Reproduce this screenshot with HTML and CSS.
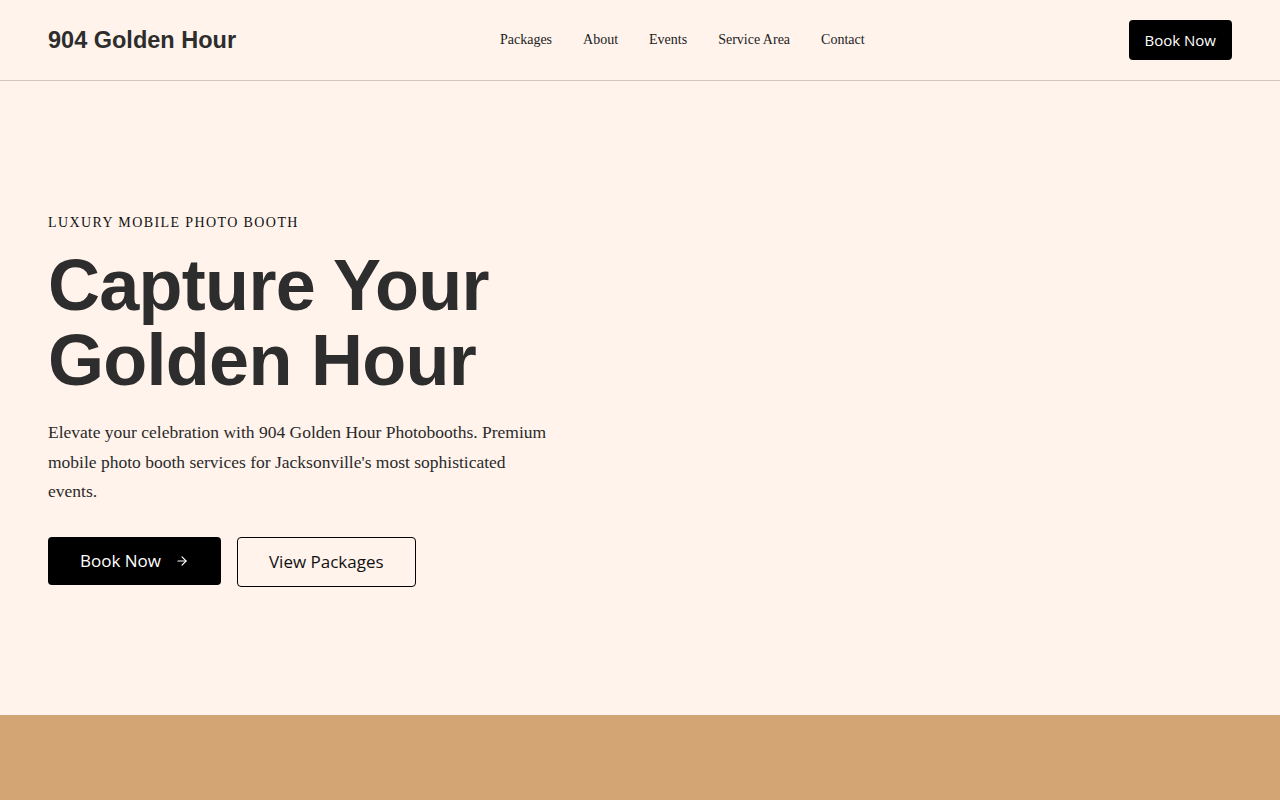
FILE: index.html
```html
<!DOCTYPE html>
<html lang="en">
<head>
    <meta charset="UTF-8">
    <meta name="viewport" content="width=device-width, initial-scale=1.0">
    <title>904 Golden Hour Photobooths</title>
    <link rel="stylesheet" href="styles.css">
</head>
<body>
    <header class="site-header">
        <a href="#" class="logo">904 Golden Hour</a>
        <nav class="main-nav">
            <a href="#packages">Packages</a>
            <a href="#about">About</a>
            <a href="#events">Events</a>
            <a href="#service-area">Service Area</a>
            <a href="#contact">Contact</a>
        </nav>
        <a href="#book" class="btn btn-dark btn-small">Book Now</a>
    </header>

    <section class="hero">
        <div class="hero-content">
            <p class="eyebrow">Luxury Mobile Photo Booth</p>
            <h1>Capture Your Golden Hour</h1>
            <p class="lead">Elevate your celebration with 904 Golden Hour Photobooths. Premium mobile photo booth services for Jacksonville's most sophisticated events.</p>
            <div class="hero-actions">
                <a href="#book" class="btn btn-dark btn-large">
                    Book Now
                    <svg class="arrow" width="14" height="14" viewBox="0 0 24 24" fill="none" stroke="currentColor" stroke-width="2" stroke-linecap="round" stroke-linejoin="round"><path d="M5 12h14"/><path d="M12 5l7 7-7 7"/></svg>
                </a>
                <a href="#packages" class="btn btn-outline btn-large">View Packages</a>
            </div>
        </div>
    </section>

    <section class="band"></section>
</body>
</html>
```

FILE: styles.css
```css
* {
    box-sizing: border-box;
}
body {
    margin: 0;
    background-color: #fff3ec;
    color: #2d2d2d;
    font-family: "Liberation Serif", "Times New Roman", serif;
}
a {
    color: inherit;
    text-decoration: none;
}
.site-header {
    height: 81px;
    display: flex;
    align-items: center;
    justify-content: space-between;
    padding: 0 48px;
    border-bottom: 1px solid #d3c6bd;
}
.logo {
    font-family: "Liberation Sans", Arial, sans-serif;
    font-weight: bold;
    font-size: 23.5px;
    color: #2d2d2d;
}
.main-nav {
    display: flex;
    gap: 31px;
    font-size: 14px;
}
.main-nav a {
    color: #222;
}
.btn {
    display: inline-flex;
    align-items: center;
    justify-content: center;
    font-family: "Open Sans", "Noto Sans", sans-serif;
    border-radius: 4px;
}
.btn-dark {
    background-color: #000;
    color: #fff;
}
.btn-small {
    height: 40px;
    padding: 0 16px;
    font-size: 15px;
}
.btn-large {
    height: 48px;
    font-size: 17px;
    padding: 0 32px;
}
.btn-outline {
    border: 1px solid #000;
    color: #111;
    height: 50px;
    padding: 0 31px;
}
.btn .arrow {
    margin-left: 14px;
}
.hero {
    height: 634px;
    display: flex;
    align-items: center;
    padding: 0 48px;
}
.hero-content {
    max-width: 520px;
    margin-top: 6px;
}
.eyebrow {
    margin: 0 0 17px;
    font-size: 14px;
    letter-spacing: 1.4px;
    text-transform: uppercase;
    color: #111;
}
h1 {
    margin: 0 0 20px;
    font-family: "Liberation Sans", Arial, sans-serif;
    font-size: 72px;
    line-height: 1.04;
    letter-spacing: -0.01em;
    font-weight: bold;
    color: #2d2d2d;
}
.lead {
    margin: 0 0 30px;
    font-size: 17.5px;
    line-height: 1.69;
    color: #2a2a2a;
    max-width: 510px;
}
.hero-actions {
    display: flex;
    align-items: flex-start;
    gap: 16px;
}
.band {
    height: 120px;
    background-color: #d4a574;
}
```
